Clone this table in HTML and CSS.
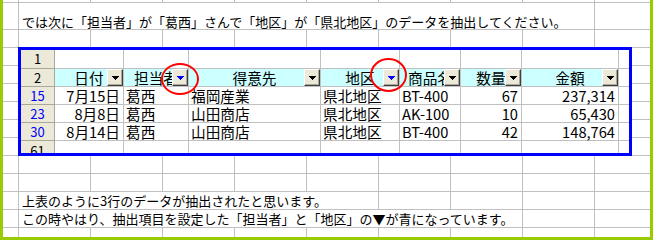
FILE: index.html
```html
<!DOCTYPE html>
<html lang="ja">
<head>
<meta charset="utf-8">
<title>オートフィルタ</title>
<link rel="stylesheet" href="styles.css">
</head>
<body>
<div class="frame">
  <div class="sheet">
    <div class="srow r-top"></div>
    <div class="srow r-text"><div class="span w8 lead">では次に「担当者」が「葛西」さんで「地区」が「県北地区」のデータを抽出してください。</div></div>
    <div class="srow"></div>
    <div class="srow"></div>
    <div class="srow"></div>
    <div class="srow"></div>
    <div class="srow"></div>
    <div class="srow"></div>
    <div class="srow"></div>
    <div class="srow"></div>
    <div class="srow"></div>
    <div class="srow"><div class="span w5">上表のように3行のデータが抽出されたと思います。</div></div>
    <div class="srow"><div class="span w7">この時やはり、抽出項目を設定した「担当者」と「地区」の▼が青になっています。</div></div>
    <div class="srow r-last"></div>
  </div>

  <div class="table">
    <!-- row 1 -->
    <div class="c rh">1</div>
    <div class="c"></div><div class="c"></div><div class="c"></div><div class="c"></div>
    <div class="c"></div><div class="c"></div><div class="c"></div><div class="c end"></div>
    <!-- row 2 -->
    <div class="c rh">2</div>
    <div class="c hd">日付<span class="btn"><svg class="tri" width="7" height="4" viewBox="0 0 7 4"><path d="M0 0h7v1h-1v1h-1v1h-1v1h-1v-1h-1v-1h-1v-1h-1z"/></svg></span></div>
    <div class="c hd">担当者<span class="btn on"><svg class="tri" width="7" height="4" viewBox="0 0 7 4"><path d="M0 0h7v1h-1v1h-1v1h-1v1h-1v-1h-1v-1h-1v-1h-1z"/></svg></span></div>
    <div class="c hd">得意先<span class="btn"><svg class="tri" width="7" height="4" viewBox="0 0 7 4"><path d="M0 0h7v1h-1v1h-1v1h-1v1h-1v-1h-1v-1h-1v-1h-1z"/></svg></span></div>
    <div class="c hd">地区<span class="btn on"><svg class="tri" width="7" height="4" viewBox="0 0 7 4"><path d="M0 0h7v1h-1v1h-1v1h-1v1h-1v-1h-1v-1h-1v-1h-1z"/></svg></span></div>
    <div class="c hd">商品名<span class="btn"><svg class="tri" width="7" height="4" viewBox="0 0 7 4"><path d="M0 0h7v1h-1v1h-1v1h-1v1h-1v-1h-1v-1h-1v-1h-1z"/></svg></span></div>
    <div class="c hd">数量<span class="btn"><svg class="tri" width="7" height="4" viewBox="0 0 7 4"><path d="M0 0h7v1h-1v1h-1v1h-1v1h-1v-1h-1v-1h-1v-1h-1z"/></svg></span></div>
    <div class="c hd">金額<span class="btn"><svg class="tri" width="7" height="4" viewBox="0 0 7 4"><path d="M0 0h7v1h-1v1h-1v1h-1v1h-1v-1h-1v-1h-1v-1h-1z"/></svg></span></div>
    <div class="c end"></div>
    <!-- row 15 -->
    <div class="c rh blue">15</div>
    <div class="c rt">7月15日</div>
    <div class="c lt">葛西</div>
    <div class="c lt">福岡産業</div>
    <div class="c lt">県北地区</div>
    <div class="c lt">BT-400</div>
    <div class="c rt">67</div>
    <div class="c rt">237,314</div>
    <div class="c end"></div>
    <!-- row 23 -->
    <div class="c rh blue">23</div>
    <div class="c rt">8月8日</div>
    <div class="c lt">葛西</div>
    <div class="c lt">山田商店</div>
    <div class="c lt">県北地区</div>
    <div class="c lt">AK-100</div>
    <div class="c rt">10</div>
    <div class="c rt">65,430</div>
    <div class="c end"></div>
    <!-- row 30 -->
    <div class="c rh blue">30</div>
    <div class="c rt">8月14日</div>
    <div class="c lt">葛西</div>
    <div class="c lt">山田商店</div>
    <div class="c lt">県北地区</div>
    <div class="c lt">BT-400</div>
    <div class="c rt">42</div>
    <div class="c rt">148,764</div>
    <div class="c end"></div>
    <!-- row 61 (cut off) -->
    <div class="c rh b0 cut">61</div>
    <div class="c b0"></div><div class="c b0"></div><div class="c b0"></div><div class="c b0"></div>
    <div class="c b0"></div><div class="c b0"></div><div class="c b0"></div><div class="c b0 end"></div>
  </div>

  <div class="ring ring1"></div>
  <div class="ring ring2"></div>
</div>
</body>
</html>
```

FILE: styles.css
```css
* {
  box-sizing: border-box;
  margin: 0;
  padding: 0;
}

body {
  margin: 0;
  background: #ffffff;
  font-family: "Noto Sans CJK JP", "Noto Sans", sans-serif;
  color: #000000;
}

.frame {
  position: relative;
  width: 653px;
  height: 240px;
  border-left: 3px solid #99cc00;
  border-right: 3px solid #99cc00;
  border-bottom: 3px solid #99cc00;
  overflow: hidden;
  background: #ffffff;
}

/* background worksheet */
.sheet {
  display: flex;
  flex-direction: column;
  height: 100%;
}

.srow {
  flex: none;
  display: flex;
  height: 18px;
  border-bottom: 1px solid #c0c0c0;
  background-image: linear-gradient(to right, transparent 71px, #c0c0c0 71px);
  background-size: 72px 100%;
  background-position: 16px 0;
  background-repeat: repeat-x;
}

.r-top { height: 3px; }
.r-text { height: 27px; }
.r-last { flex: 1; border-bottom: none; }

.span {
  margin-left: 16px;
  padding-left: 3px;
  background: #ffffff;
  font-size: 13px;
  line-height: 16px;
  white-space: nowrap;
  display: flex;
  align-items: center;
}

.lead {
  align-items: flex-end;
  line-height: 15px;
}

.w8 { width: 575px; }
.w7 { width: 503px; }
.w5 { width: 359px; }

/* pasted filtered table */
.table {
  position: absolute;
  left: 15px;
  top: 47px;
  width: 614px;
  height: 109px;
  border: 3px solid #0000ff;
  background: #ffffff;
  display: grid;
  grid-template-columns: 34px 69px 65px 132px 79px 61px 61px 97px 10px;
  grid-template-rows: 19px 18px 18px 18px 18px 12px;
  font-size: 14.67px;
}

.c {
  display: flex;
  align-items: center;
  border-right: 1px solid #c0c0c0;
  border-bottom: 1px solid #c0c0c0;
  white-space: nowrap;
  line-height: 16px;
}

.c.end { border-right: none; }
.c.b0 { border-bottom: none; }

.rh {
  justify-content: center;
  background: #ece9d8;
  border-right-color: #aca899;
  border-bottom-color: #aca899;
  font-size: 13px;
  color: #000000;
}

.rh.blue { color: #0000ff; }

.rh.cut {
  align-items: flex-start;
  padding-top: 2px;
  overflow: hidden;
}

.hd {
  position: relative;
  justify-content: center;
  background: #ccffff;
}

.rt {
  justify-content: flex-end;
  padding-right: 3px;
}

.lt {
  padding-left: 2px;
}

.btn {
  position: absolute;
  right: 0;
  top: 0;
  width: 16px;
  height: 17px;
  display: flex;
  align-items: center;
  justify-content: center;
  padding: 1px 0 0 1px;
  background: #ece9d8;
  border: 1px solid;
  border-color: #ffffff #404040 #404040 #ffffff;
  box-shadow: inset -1px -1px 0 #aca899;
  color: #000000;
}

.btn.on { color: #0000ff; }

.tri {
  display: block;
  fill: currentColor;
  shape-rendering: crispEdges;
}

/* red annotation circles */
.ring {
  position: absolute;
  border: 2px solid #ff0000;
  border-radius: 50%;
}

.ring1 {
  left: 158px;
  top: 63px;
  width: 38px;
  height: 32px;
}

.ring2 {
  left: 367px;
  top: 58px;
  width: 37px;
  height: 34px;
}
```
